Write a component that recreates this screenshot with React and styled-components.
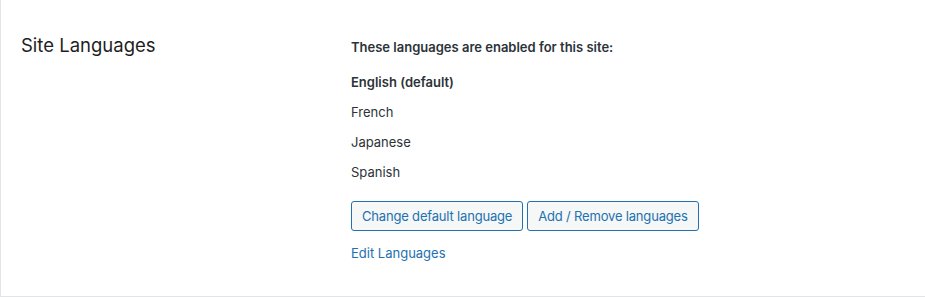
import React from "react";
import styled, { createGlobalStyle } from "styled-components";

const Global = createGlobalStyle`
  html, body { margin: 0; padding: 0; background: #ffffff; }
  body { font-family: Inter, "Noto Sans", sans-serif; -webkit-font-smoothing: antialiased; }
`;

const Card = styled.section`
  box-sizing: border-box;
  width: 925px;
  height: 297px;
  background: #ffffff;
  border-left: 1px solid #e2e4e7;
  border-bottom: 1px solid #e2e4e7;
  display: grid;
  grid-template-columns: 330px 1fr;
  padding-left: 20px;
`;

const Title = styled.h2`
  margin: 33px 0 0;
  font-size: 18.5px;
  line-height: 24px;
  font-weight: 400;
  color: #1e1e1e;
`;

const Body = styled.div`
  display: flex;
  flex-direction: column;
  align-items: flex-start;
  padding-top: 37px;
`;

const Lead = styled.p`
  margin: 0 0 15px;
  font-size: 13px;
  line-height: 20px;
  font-weight: 600;
  color: #2c3338;
`;

const LangList = styled.ul`
  list-style: none;
  margin: 0;
  padding: 0;
  display: flex;
  flex-direction: column;
  gap: 10px;
`;

const Lang = styled.li`
  font-size: 13px;
  line-height: 20px;
  font-weight: ${(p) => (p.$default ? 600 : 400)};
  color: #2c3338;
`;

const Actions = styled.div`
  display: flex;
  gap: 4px;
  margin-top: 19px;
`;

const Button = styled.button`
  box-sizing: border-box;
  height: 30px;
  padding: 0 10px;
  border: 1px solid #2271b1;
  border-radius: 3px;
  background: #f6f7f7;
  color: #2271b1;
  font-family: inherit;
  font-size: 13px;
  letter-spacing: -0.18px;
  line-height: 28px;
  cursor: pointer;
`;

const EditLink = styled.a`
  margin-top: 12px;
  font-size: 13px;
  line-height: 20px;
  color: #2271b1;
  text-decoration: none;
`;

export default function App() {
  const langs = [
    { name: "English (default)", def: true },
    { name: "French" },
    { name: "Japanese" },
    { name: "Spanish" },
  ];
  return (
    <>
      <Global />
      <Card>
        <Title>Site Languages</Title>
        <Body>
          <Lead>These languages are enabled for this site:</Lead>
          <LangList>
            {langs.map((l) => (
              <Lang key={l.name} $default={l.def}>
                {l.name}
              </Lang>
            ))}
          </LangList>
          <Actions>
            <Button>Change default language</Button>
            <Button>Add / Remove languages</Button>
          </Actions>
          <EditLink href="#">Edit Languages</EditLink>
        </Body>
      </Card>
    </>
  );
}
